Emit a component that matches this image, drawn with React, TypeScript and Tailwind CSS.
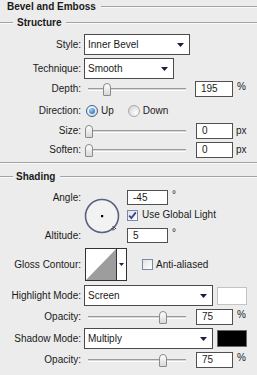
import React from "react";

const Etched = ({ className = "" }: { className?: string }) => (
  <div className={`h-[2px] border-t border-t-[#a3a3a3] border-b border-b-[#fafafa] ${className}`} />
);

const Arrow = () => (
  <svg width="7" height="4" viewBox="0 0 7 4">
    <path d="M0 0H7L3.5 4Z" fill="#1c1c46" />
  </svg>
);

function Select({ value, className }: { value: string; className: string }) {
  return (
    <div className={`flex items-center justify-between border border-[#4a4a4a] bg-white pl-[3px] pr-[5px] ${className}`}>
      <span>{value}</span>
      <Arrow />
    </div>
  );
}

function Num({ value, className = "w-[38px] h-[16px]" }: { value: string; className?: string }) {
  return (
    <div className={`flex items-center border border-[#505050] bg-white pl-[5px] ${className}`}>{value}</div>
  );
}

function Slider({ thumb }: { thumb: string }) {
  return (
    <div className="relative w-[108px] h-[16px] flex items-center">
      <div className="ml-[4px] w-[98px] h-[3px] border-t border-t-[#9b9b9b] bg-[#d6d6d6] border-b border-b-white" />
      <div
        className={`absolute top-[2px] w-[8px] h-[13px] rounded-t-[4px] rounded-b-[1px] border border-[#8a8a8a] bg-gradient-to-b from-white to-[#d8d8d8] ${thumb}`}
      />
    </div>
  );
}

function Label({ children }: { children: React.ReactNode }) {
  return <div className="w-[81px] shrink-0 text-right whitespace-nowrap">{children}</div>;
}

function Check({ checked }: { checked: boolean }) {
  return (
    <div className="w-[11px] h-[11px] border border-[#7a8aa6] bg-gradient-to-br from-[#e2e2e2] to-white flex items-center justify-center">
      {checked && (
        <svg width="9" height="9" viewBox="0 0 9 9">
          <path d="M1.2 4.6 L3.4 7 L7.8 1.4" stroke="#3a3f9e" strokeWidth="1.8" fill="none" />
        </svg>
      )}
    </div>
  );
}

export default function App() {
  return (
    <div className="w-[257px] h-[375px] overflow-hidden bg-[#ececec] text-[10px] leading-none text-[#1a1a1a] font-['Liberation_Sans',Arial,sans-serif] flex flex-col">
      {/* Title */}
      <div className="h-[13px] flex items-center">
        <span className="pl-[7px] font-bold whitespace-nowrap">Bevel and Emboss</span>
        <Etched className="flex-1 ml-[5px]" />
      </div>

      {/* Structure header */}
      <div className="mt-[3px] h-[14px] flex items-center">
        <Etched className="w-[13px]" />
        <span className="ml-[4px] font-bold">Structure</span>
        <Etched className="flex-1 ml-[5px]" />
      </div>

      {/* Style */}
      <div className="mt-[4px] h-[21px] flex items-center">
        <Label>Style:</Label>
        <Select value="Inner Bevel" className="ml-[3px] w-[106px] h-[21px]" />
      </div>

      {/* Technique */}
      <div className="mt-[3px] h-[21px] flex items-center">
        <Label>Technique:</Label>
        <Select value="Smooth" className="ml-[3px] w-[90px] h-[21px]" />
      </div>

      {/* Depth */}
      <div className="mt-[2px] h-[16px] flex items-center">
        <Label>Depth:</Label>
        <div className="ml-[3px]">
          <Slider thumb="left-[19px]" />
        </div>
        <Num value="195" className="ml-[3px] w-[38px] h-[16px]" />
        <span className="ml-[4px] self-start mt-[1px]">%</span>
      </div>

      {/* Direction */}
      <div className="mt-[7px] h-[14px] flex items-center">
        <Label>Direction:</Label>
        <div className="ml-[5px] w-[12px] h-[12px] rounded-full border border-[#3b5f86] bg-[radial-gradient(circle_at_40%_35%,#ffffff,#c9d6e4)] flex items-center justify-center">
          <div className="w-[6px] h-[6px] rounded-full bg-[radial-gradient(circle_at_35%_30%,#9cd0ff,#1a5ea8)]" />
        </div>
        <span className="ml-[3px]">Up</span>
        <div className="ml-[14px] w-[12px] h-[12px] rounded-full border border-[#a9a9a9] bg-[radial-gradient(circle_at_70%_70%,#ffffff,#cfcfcf)]" />
        <span className="ml-[3px]">Down</span>
      </div>

      {/* Size */}
      <div className="mt-[5px] h-[16px] flex items-center">
        <Label>Size:</Label>
        <div className="ml-[3px]">
          <Slider thumb="left-[1px]" />
        </div>
        <Num value="0" className="ml-[4px] w-[37px] h-[16px]" />
        <span className="ml-[3px]">px</span>
      </div>

      {/* Soften */}
      <div className="mt-[3px] h-[16px] flex items-center">
        <Label>Soften:</Label>
        <div className="ml-[3px]">
          <Slider thumb="left-[1px]" />
        </div>
        <Num value="0" className="ml-[4px] w-[37px] h-[16px]" />
        <span className="ml-[3px]">px</span>
      </div>

      <Etched className="mt-[4px] w-full" />

      {/* Shading header */}
      <div className="mt-[6px] h-[14px] flex items-center">
        <Etched className="w-[13px]" />
        <span className="ml-[3px] font-bold">Shading</span>
        <Etched className="flex-1 ml-[5px]" />
      </div>

      {/* Angle / Altitude */}
      <div className="mt-[6px] h-[53px] flex">
        <div className="w-[81px] shrink-0 flex flex-col justify-between items-end">
          <div className="h-[15px] flex items-center">Angle:</div>
          <div className="h-[15px] flex items-center">Altitude:</div>
        </div>
        <div className="ml-[3px] mt-[8px] w-[36px] h-[36px]">
          <svg width="36" height="36" viewBox="0 0 36 36">
            <circle cx="18" cy="18" r="16.5" fill="#f2f2f2" stroke="#5b6085" strokeWidth="1.6" />
            <rect x="17" y="17" width="2.2" height="2.2" fill="#000" />
            <g fill="#333">
              <rect x="28.5" y="28" width="1" height="1" />
              <rect x="29.5" y="29" width="1" height="1" />
              <rect x="27.5" y="30" width="1" height="1" />
              <rect x="29.5" y="31" width="1" height="1" />
              <rect x="31" y="30" width="1" height="1" />
              <rect x="28.5" y="31.5" width="1" height="1" />
            </g>
          </svg>
        </div>
        <div className="ml-[7px] flex flex-col">
          <div className="h-[15px] flex items-center">
            <Num value="-45" className="w-[41px] h-[15px]" />
            <span className="ml-[4px] self-start">°</span>
          </div>
          <div className="mt-[4px] h-[12px] flex items-center">
            <Check checked />
            <span className="ml-[4px]">Use Global Light</span>
          </div>
          <div className="mt-[7px] h-[15px] flex items-center">
            <Num value="5" className="w-[41px] h-[15px]" />
            <span className="ml-[4px] self-start">°</span>
          </div>
        </div>
      </div>

      {/* Gloss Contour */}
      <div className="mt-[5px] h-[33px] flex items-center">
        <Label>Gloss Contour:</Label>
        <div className="ml-[4px] w-[42px] h-[33px] border border-[#333] bg-white flex">
          <svg width="30" height="31" viewBox="0 0 30 31" className="block">
            <path d="M0 31 L30 0 L30 31 Z" fill="#9d9d9d" />
          </svg>
          <div className="w-[1px] h-full bg-[#333]" />
          <div className="flex-1 flex items-center justify-center">
            <svg width="5" height="3" viewBox="0 0 5 3">
              <path d="M0 0H5L2.5 3Z" fill="#1c1c46" />
            </svg>
          </div>
        </div>
        <div className="ml-[15px]">
          <Check checked={false} />
        </div>
        <span className="ml-[3px]">Anti-aliased</span>
      </div>

      {/* Highlight Mode */}
      <div className="mt-[4px] h-[21px] flex items-center">
        <Label>Highlight Mode:</Label>
        <Select value="Screen" className="ml-[3px] w-[129px] h-[21px]" />
        <div className="ml-[4px] w-[30px] h-[18px] border border-[#c4c4c4] bg-white" />
      </div>

      {/* Opacity */}
      <div className="mt-[3px] h-[16px] flex items-center">
        <Label>Opacity:</Label>
        <div className="ml-[3px]">
          <Slider thumb="left-[75px]" />
        </div>
        <Num value="75" className="ml-[4px] w-[37px] h-[16px]" />
        <span className="ml-[4px] self-start mt-[1px]">%</span>
      </div>

      {/* Shadow Mode */}
      <div className="mt-[3px] h-[21px] flex items-center">
        <Label>Shadow Mode:</Label>
        <Select value="Multiply" className="ml-[3px] w-[129px] h-[21px]" />
        <div className="ml-[4px] w-[30px] h-[17px] border border-[#6a6a6a] bg-black" />
      </div>

      {/* Opacity */}
      <div className="mt-[3px] h-[16px] flex items-center">
        <Label>Opacity:</Label>
        <div className="ml-[3px]">
          <Slider thumb="left-[75px]" />
        </div>
        <Num value="75" className="ml-[4px] w-[37px] h-[16px]" />
        <span className="ml-[4px] self-start mt-[1px]">%</span>
      </div>
    </div>
  );
}
